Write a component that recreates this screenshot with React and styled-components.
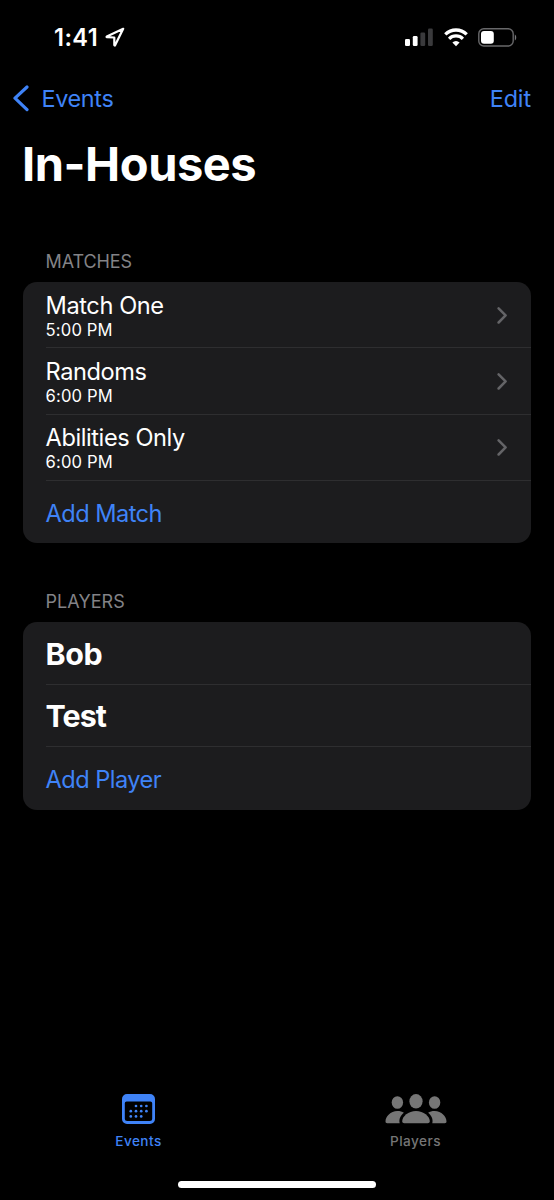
import React, { useState } from "react";
import styled, { createGlobalStyle } from "styled-components";

const GlobalStyle = createGlobalStyle`
  * {
    box-sizing: border-box;
  }
  body {
    margin: 0;
    background: #000;
  }
  button {
    background: none;
    border: none;
    padding: 0;
    margin: 0;
    font: inherit;
    color: inherit;
    cursor: pointer;
  }
`;

const Screen = styled.div`
  width: 554px;
  height: 1200px;
  display: flex;
  flex-direction: column;
  background: #000;
  color: #fff;
  font-family: Inter, "Liberation Sans", sans-serif;
  overflow: hidden;
  white-space: nowrap;
`;

const StatusBar = styled.div`
  height: 74px;
  padding: 0 37px 0 54px;
  display: flex;
  align-items: center;
  justify-content: space-between;
`;

const StatusGroup = styled.div`
  display: flex;
  align-items: center;
  gap: ${(props) => props.$gap}px;
`;

const Time = styled.span`
  padding-top: 1px;
  font-size: 23.6px;
  font-weight: 600;
  letter-spacing: 0.4px;
  line-height: 30px;
`;

const NavBar = styled.nav`
  height: 49px;
  padding: 0 23px 0 12px;
  display: flex;
  align-items: center;
  justify-content: space-between;
`;

const NavButton = styled.button`
  display: flex;
  align-items: center;
  gap: 11.5px;
  color: #3f83f7;
  font-size: 23.4px;
  line-height: 30px;
  letter-spacing: ${(props) => props.$tracking}px;
`;

const Title = styled.h1`
  margin: 11px 0 0 22px;
  font-size: 47px;
  line-height: 60px;
  font-weight: 700;
  letter-spacing: -0.45px;
`;

const Section = styled.section`
  margin: ${(props) => props.$top}px 23px 0;
`;

const SectionHeader = styled.h2`
  margin: 0 0 8px;
  padding-left: 22.5px;
  font-size: 18px;
  line-height: 24px;
  font-weight: 400;
  letter-spacing: ${(props) => props.$tracking}px;
  color: #838387;
`;

const Card = styled.div`
  background: #1c1c1e;
  border-radius: 14px;
  padding-left: 22.6px;
`;

const Row = styled.div`
  height: ${(props) => props.$height}px;
  padding-right: 23px;
  display: flex;
  align-items: center;
  justify-content: space-between;
  border-bottom: 1px solid #2e2e30;

  &:last-child {
    border-bottom: none;
  }
`;

const MatchText = styled.div`
  padding-top: 3px;
`;

const MatchName = styled.div`
  font-size: 23.6px;
  line-height: 28px;
  letter-spacing: -0.43px;
`;

const MatchTime = styled.div`
  font-size: 16.6px;
  line-height: 21px;
  letter-spacing: 0.15px;
`;

const PlayerName = styled.div`
  padding-top: 2px;
  font-size: 30.4px;
  line-height: 38px;
  font-weight: 700;
  letter-spacing: ${(props) => props.$tracking}px;
`;

const AddButton = styled.button`
  padding-top: 3px;
  color: #3f83f7;
  font-size: 23.6px;
  line-height: 28px;
  letter-spacing: -0.55px;
`;

const TabBar = styled.div`
  margin-top: auto;
  height: 87px;
  display: grid;
  grid-template-columns: 1fr 1fr;
`;

const Tab = styled.button`
  display: flex;
  flex-direction: column;
  align-items: center;
  gap: 8px;
  height: 60px;
  color: ${(props) => (props.$active ? "#3f83f7" : "#767676")};
  font-size: 13.6px;
  font-weight: 500;
  line-height: 18px;
  letter-spacing: 0.45px;
`;

const HomeIndicator = styled.div`
  width: 198px;
  height: 7px;
  margin: 0 auto 12px;
  flex: none;
  border-radius: 4px;
  background: #fff;
`;

const LocationIcon = () => (
  <svg width="20" height="20" viewBox="0 0 20 20" fill="none">
    <path
      d="M18.2 1.8 1.8 9.4c-.4.2-.3.8.1.8l7.4.3v7.6c0 .5.6.6.8.2Z"
      stroke="#fff"
      strokeWidth="2.2"
      strokeLinejoin="round"
    />
  </svg>
);

const SignalIcon = () => (
  <svg width="28" height="19" viewBox="0 0 28 19">
    <rect x="0" y="11" width="5" height="7" rx="1.3" fill="#fff" />
    <rect x="7.8" y="8" width="4.8" height="10" rx="1.3" fill="#fff" />
    <rect x="15.4" y="4.4" width="4.8" height="13.6" rx="1.3" fill="#3a3a3c" />
    <rect x="23" y="0.6" width="4.8" height="17.4" rx="1.3" fill="#3a3a3c" />
  </svg>
);

const WifiIcon = () => (
  <svg width="24" height="19" viewBox="0 0 24 19" fill="none" stroke="#fff" strokeWidth="3.3">
    <path d="M1.3 6.4A15.2 15.2 0 0 1 22.7 6.4" />
    <path d="M5.1 10.8a9.8 9.8 0 0 1 13.8 0" />
    <path d="m12 18.2-3.6-3.7a5 5 0 0 1 7.2 0Z" fill="#fff" stroke="none" />
  </svg>
);

const BatteryIcon = () => (
  <svg width="39" height="19" viewBox="0 0 39 19">
    <rect x="0.8" y="0.8" width="34.4" height="17.2" rx="5" fill="none" stroke="#68686a" strokeWidth="1.4" />
    <rect x="3" y="3" width="12.8" height="12.8" rx="3" fill="#fff" />
    <path d="M36.8 6.4c1.9.7 1.9 5.3 0 6Z" fill="#77777a" />
  </svg>
);

const BackIcon = () => (
  <svg width="18" height="28" viewBox="0 0 18 28" fill="none">
    <path d="M15 2 3 13.2 15 24.6" stroke="#3f83f7" strokeWidth="3.2" strokeLinecap="round" strokeLinejoin="round" />
  </svg>
);

const ChevronIcon = () => (
  <svg width="12" height="18" viewBox="0 0 12 18" fill="none">
    <path d="m2.6 2.3 7 7.1-7 7.1" stroke="#646467" strokeWidth="2.5" strokeLinecap="round" strokeLinejoin="round" />
  </svg>
);

const calendarDots = [
  [14, 12], [19.2, 12], [24.4, 12],
  [8.8, 17.2], [14, 17.2], [19.2, 17.2], [24.4, 17.2],
  [8.8, 22.4], [14, 22.4], [19.2, 22.4],
];

const CalendarIcon = () => (
  <svg width="33" height="30" viewBox="0 0 33 30" fill="currentColor">
    <path
      fillRule="evenodd"
      d="M5 0h23a5 5 0 0 1 5 5v20a5 5 0 0 1-5 5H5a5 5 0 0 1-5-5V5a5 5 0 0 1 5-5ZM4.6 7.4A1.8 1.8 0 0 0 2.8 9.2v15.4a2.5 2.5 0 0 0 2.5 2.5h22.4a2.5 2.5 0 0 0 2.5-2.5V9.2a1.8 1.8 0 0 0-1.8-1.8Z"
    />
    {calendarDots.map(([x, y]) => (
      <circle key={`${x}-${y}`} cx={x} cy={y} r="1.35" />
    ))}
  </svg>
);

const PeopleIcon = () => (
  <svg width="62" height="30" viewBox="0 0 62 30" fill="currentColor">
    <ellipse cx="31" cy="7.3" rx="6.6" ry="7.2" />
    <ellipse cx="12.4" cy="8.5" rx="5.7" ry="6.3" />
    <ellipse cx="49.6" cy="8.5" rx="5.7" ry="6.3" />
    <path d="M31 17c7.6 0 13.8 5.4 13.8 10.3 0 1.3-.8 1.9-2.2 1.9H19.4c-1.4 0-2.2-.6-2.2-1.9C17.2 22.4 23.4 17 31 17Z" />
    <path d="M12.4 17.1c2.6 0 4.8.6 6.5 1.7-3.4 2.6-5.2 6.4-4.2 10.4H2.3c-1.2 0-1.8-.6-1.8-1.7 0-4.7 5-10.4 11.9-10.4Z" />
    <path d="M49.6 17.1c-2.6 0-4.8.6-6.5 1.7 3.4 2.6 5.2 6.4 4.2 10.4h12.4c1.2 0 1.8-.6 1.8-1.7 0-4.7-5-10.4-11.9-10.4Z" />
  </svg>
);

const matches = [
  { name: "Match One", time: "5:00 PM" },
  { name: "Randoms", time: "6:00 PM" },
  { name: "Abilities Only", time: "6:00 PM" },
];

const players = [
  { name: "Bob", tracking: -0.4 },
  { name: "Test", tracking: -0.95 },
];

export default function App() {
  const [tab, setTab] = useState("events");

  return (
    <>
      <GlobalStyle />
      <Screen>
        <StatusBar>
          <StatusGroup $gap={7}>
            <Time>1:41</Time>
            <LocationIcon />
          </StatusGroup>
          <StatusGroup $gap={10.3}>
            <SignalIcon />
            <WifiIcon />
            <BatteryIcon />
          </StatusGroup>
        </StatusBar>

        <NavBar>
          <NavButton $tracking={-0.35}>
            <BackIcon />
            Events
          </NavButton>
          <NavButton $tracking={-0.1}>Edit</NavButton>
        </NavBar>

        <Title>In-Houses</Title>

        <Section $top={56}>
          <SectionHeader $tracking={-0.1}>MATCHES</SectionHeader>
          <Card>
            {matches.map((match) => (
              <Row key={match.name} $height={66.3}>
                <MatchText>
                  <MatchName>{match.name}</MatchName>
                  <MatchTime>{match.time}</MatchTime>
                </MatchText>
                <ChevronIcon />
              </Row>
            ))}
            <Row $height={62.6}>
              <AddButton>Add Match</AddButton>
            </Row>
          </Card>
        </Section>

        <Section $top={46.9}>
          <SectionHeader $tracking={0.05}>PLAYERS</SectionHeader>
          <Card>
            {players.map((player) => (
              <Row key={player.name} $height={62.4}>
                <PlayerName $tracking={player.tracking}>{player.name}</PlayerName>
              </Row>
            ))}
            <Row $height={62.4}>
              <AddButton>Add Player</AddButton>
            </Row>
          </Card>
        </Section>

        <TabBar>
          <Tab $active={tab === "events"} onClick={() => setTab("events")}>
            <CalendarIcon />
            Events
          </Tab>
          <Tab $active={tab === "players"} onClick={() => setTab("players")}>
            <PeopleIcon />
            Players
          </Tab>
        </TabBar>
        <HomeIndicator />
      </Screen>
    </>
  );
}
